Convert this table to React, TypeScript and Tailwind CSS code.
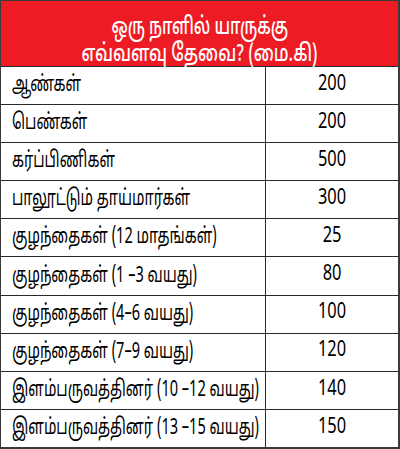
const rows = [
  { label: "ஆண்கள்", value: "200" },
  { label: "பெண்கள்", value: "200" },
  { label: "கர்ப்பிணிகள்", value: "500" },
  { label: "பாலூட்டும் தாய்மார்கள்", value: "300" },
  { label: "குழந்தைகள் (12 மாதங்கள்)", value: "25" },
  { label: "குழந்தைகள் (1 –3 வயது)", value: "80" },
  { label: "குழந்தைகள் (4–6 வயது)", value: "100" },
  { label: "குழந்தைகள் (7–9 வயது)", value: "120" },
  { label: "இளம்பருவத்தினர் (10 –12 வயது)", value: "140" },
  { label: "இளம்பருவத்தினர் (13 –15 வயது)", value: "150" },
];

export default function App() {
  return (
    <div className="w-[400px] h-[449px] bg-white font-['Liberation_Sans_Narrow','Noto_Sans_Tamil','Noto_Sans',sans-serif]">
      <div className="border border-[#3a3a3a] border-r-2 border-b-2 h-full flex flex-col">
        <div className="h-[65px] shrink-0 bg-[#ed1c24] text-white text-[24px] font-medium flex flex-col items-center justify-start gap-[6px] pt-[17px]">
          <span className="block h-[21px] leading-[21px] whitespace-nowrap scale-x-[0.66]">ஒரு நாளில் யாருக்கு</span>
          <span className="block h-[21px] leading-[21px] whitespace-nowrap scale-x-[0.7]">எவ்வளவு தேவை? (மை.கி)</span>
        </div>
        {rows.map((row) => (
          <div key={row.label} className="flex h-[38.2px] border-t border-[#2a2a2a] text-black text-[22px]">
            <div className="w-[265px] border-r border-[#2a2a2a] pl-[11px] flex items-center whitespace-nowrap overflow-hidden">
              <span className="inline-block origin-left scale-x-[0.66]">{row.label}</span>
            </div>
            <div className="flex-1 flex items-center justify-center text-[21px]">
              <span className="inline-block scale-x-[0.78]">{row.value}</span>
            </div>
          </div>
        ))}
      </div>
    </div>
  );
}
